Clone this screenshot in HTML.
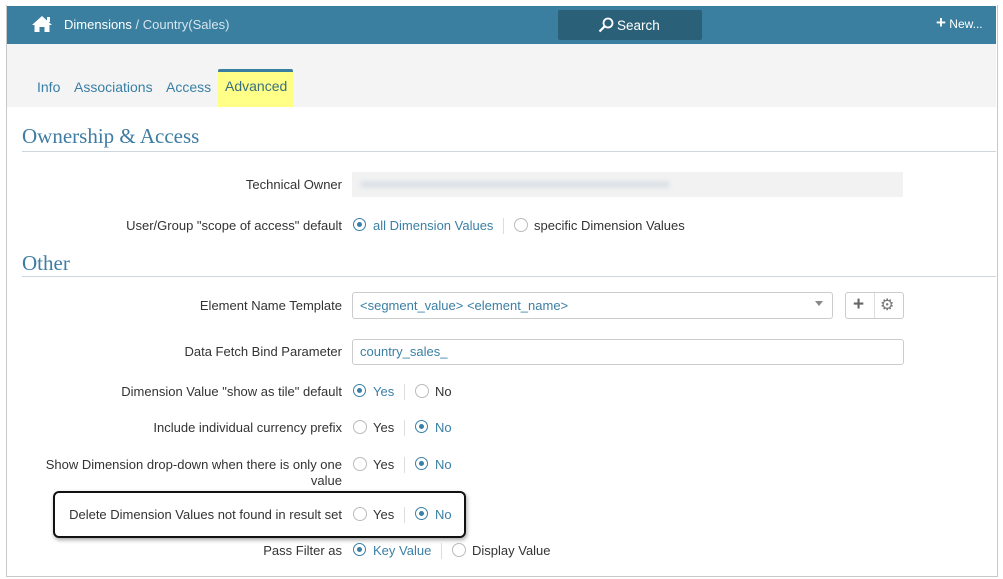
<!DOCTYPE html>
<html><head><meta charset="utf-8"><style>
body{margin:0;width:1003px;height:579px;background:#fff;font-family:"Liberation Sans",Arial,sans-serif;position:relative;overflow:hidden;font-size:13px;color:#333}
.a{position:absolute;white-space:nowrap}
.frame{position:absolute;left:6px;top:5px;width:990px;height:571px;border:1px solid #c8c8c8;border-top:none}
.lbl{position:absolute;right:661px;text-align:right;white-space:nowrap;line-height:16px}
.r{position:absolute;width:12px;height:12px;border:1px solid #bbb;border-radius:50%;background:#fff}
.r.on{border-color:#3a7fa5;border-width:1.5px;width:11px;height:11px}
.r.on::after{content:"";position:absolute;left:3px;top:3px;width:5px;height:5px;border-radius:50%;background:#3a7fa5}
.sep{position:absolute;width:1px;height:16px;background:#ddd}
.blue{color:#3a7fa5}
h2{position:absolute;margin:0;font-family:"Liberation Serif",serif;font-weight:normal;font-size:21px;color:#3f7ca3}
.line{position:absolute;left:22px;width:974px;height:1px;background:#cdd6dd}
.inp{position:absolute;border:1px solid #ccc;border-radius:3px;background:#fff;box-sizing:border-box}
</style></head><body>
<div class="frame"></div>
<div class="a" style="left:7px;top:6px;width:989px;height:38px;background:#3a7f9f"></div>
<svg class="a" style="left:31px;top:15px" width="22" height="18" viewBox="0 0 22 18"><path d="M11 1 L1 10 L3.5 10 L3.5 17 L8.5 17 L8.5 12 L13.5 12 L13.5 17 L18.5 17 L18.5 10 L21 10 Z" fill="#fff"/><rect x="16" y="2" width="3" height="5" fill="#fff"/></svg>
<div class="a" style="left:64px;top:17px;color:#fff;font-size:13px">Dimensions <span style="color:#d6e6ef">/ Country(Sales)</span></div>
<div class="a" style="left:558px;top:10px;width:144px;height:30px;background:#2b6079;border-radius:2px"></div>
<svg class="a" style="left:598px;top:17px" width="16" height="16" viewBox="0 0 16 16"><circle cx="10" cy="6" r="4.5" fill="none" stroke="#fff" stroke-width="1.8"/><path d="M6.8 9.2 L1.5 14.5" stroke="#fff" stroke-width="2.2"/></svg>
<div class="a" style="left:617px;top:18px;color:#fff;font-size:13.5px">Search</div>
<div class="a" style="left:936px;top:17px;color:#fff;font-size:12px"><b style="font-size:17px;line-height:12px">+</b> New...</div>
<div class="a" style="left:7px;top:44px;width:989px;height:63px;background:#f4f4f4"></div>
<div class="a" style="left:218px;top:69px;width:75px;height:38px;background:#ffff88;border-top:3px solid #3a7f9f;box-sizing:border-box;border-radius:2px 2px 0 0"></div>
<div class="a" style="left:37px;top:79px;font-size:14px;color:#3a7fa5">Info</div>
<div class="a" style="left:74px;top:79px;font-size:14px;color:#3a7fa5">Associations</div>
<div class="a" style="left:166px;top:79px;font-size:14px;color:#3a7fa5">Access</div>
<div class="a" style="left:225px;top:78px;font-size:14px;color:#3a6f80">Advanced</div>
<h2 style="left:22px;top:124px">Ownership &amp; Access</h2>
<div class="line" style="top:151px"></div>
<h2 style="left:22px;top:251px">Other</h2>
<div class="line" style="top:276px"></div>

<div class="lbl" style="top:177px">Technical Owner</div>
<div class="a" style="left:352px;top:172px;width:551px;height:25px;background:#f2f2f2"></div>
<div class="a" style="left:360px;top:181px;width:310px;height:7px;background:#dde2e6;border-radius:3px;filter:blur(2px)"></div>

<div class="lbl" style="top:218px">User/Group "scope of access" default</div>
<div class="r on" style="left:353px;top:218px"></div><div class="a blue" style="left:373px;top:218px">all Dimension Values</div>
<div class="sep" style="left:503px;top:218px"></div>
<div class="r" style="left:514px;top:218px"></div><div class="a" style="left:534px;top:218px">specific Dimension Values</div>

<div class="lbl" style="top:298px">Element Name Template</div>
<div class="inp" style="left:352px;top:292px;width:481px;height:27px"></div>
<div class="a blue" style="left:360px;top:298px">&lt;segment_value&gt; &lt;element_name&gt;</div>
<div class="a" style="left:815px;top:301px;width:0;height:0;border-left:4px solid transparent;border-right:4px solid transparent;border-top:5px solid #888"></div>
<div class="inp" style="left:845px;top:292px;width:59px;height:27px"></div>
<div class="a" style="left:874px;top:293px;width:1px;height:25px;background:#ddd"></div>
<div class="a" style="left:853px;top:294px;font-size:19px;font-weight:bold;color:#666">+</div>
<div class="a" style="left:880px;top:295px;font-size:16px;color:#777">⚙</div>

<div class="lbl" style="top:344px">Data Fetch Bind Parameter</div>
<div class="inp" style="left:352px;top:339px;width:552px;height:26px"></div>
<div class="a blue" style="left:360px;top:344px">country_sales_</div>

<div class="lbl" style="top:384px">Dimension Value "show as tile" default</div>
<div class="r on" style="left:353px;top:384px"></div><div class="a blue" style="left:373px;top:384px">Yes</div>
<div class="sep" style="left:404px;top:384px"></div>
<div class="r" style="left:415px;top:384px"></div><div class="a" style="left:435px;top:384px">No</div>

<div class="lbl" style="top:420px">Include individual currency prefix</div>
<div class="r" style="left:353px;top:420px"></div><div class="a" style="left:373px;top:420px">Yes</div>
<div class="sep" style="left:404px;top:420px"></div>
<div class="r on" style="left:415px;top:420px"></div><div class="a blue" style="left:435px;top:420px">No</div>

<div class="lbl" style="top:457px">Show Dimension drop-down when there is only one<br>value</div>
<div class="r" style="left:353px;top:457px"></div><div class="a" style="left:373px;top:457px">Yes</div>
<div class="sep" style="left:404px;top:457px"></div>
<div class="r on" style="left:415px;top:457px"></div><div class="a blue" style="left:435px;top:457px">No</div>

<div class="a" style="left:53px;top:491px;width:409px;height:43px;border:2px solid #111;border-radius:6px;box-shadow:1px 2px 4px rgba(0,0,0,.35)"></div>
<div class="lbl" style="top:507px">Delete Dimension Values not found in result set</div>
<div class="r" style="left:353px;top:507px"></div><div class="a" style="left:373px;top:507px">Yes</div>
<div class="sep" style="left:404px;top:507px"></div>
<div class="r on" style="left:415px;top:507px"></div><div class="a blue" style="left:435px;top:507px">No</div>

<div class="lbl" style="top:543px">Pass Filter as</div>
<div class="r on" style="left:353px;top:543px"></div><div class="a blue" style="left:373px;top:543px">Key Value</div>
<div class="sep" style="left:441px;top:543px"></div>
<div class="r" style="left:452px;top:543px"></div><div class="a" style="left:472px;top:543px">Display Value</div>
</body></html>
